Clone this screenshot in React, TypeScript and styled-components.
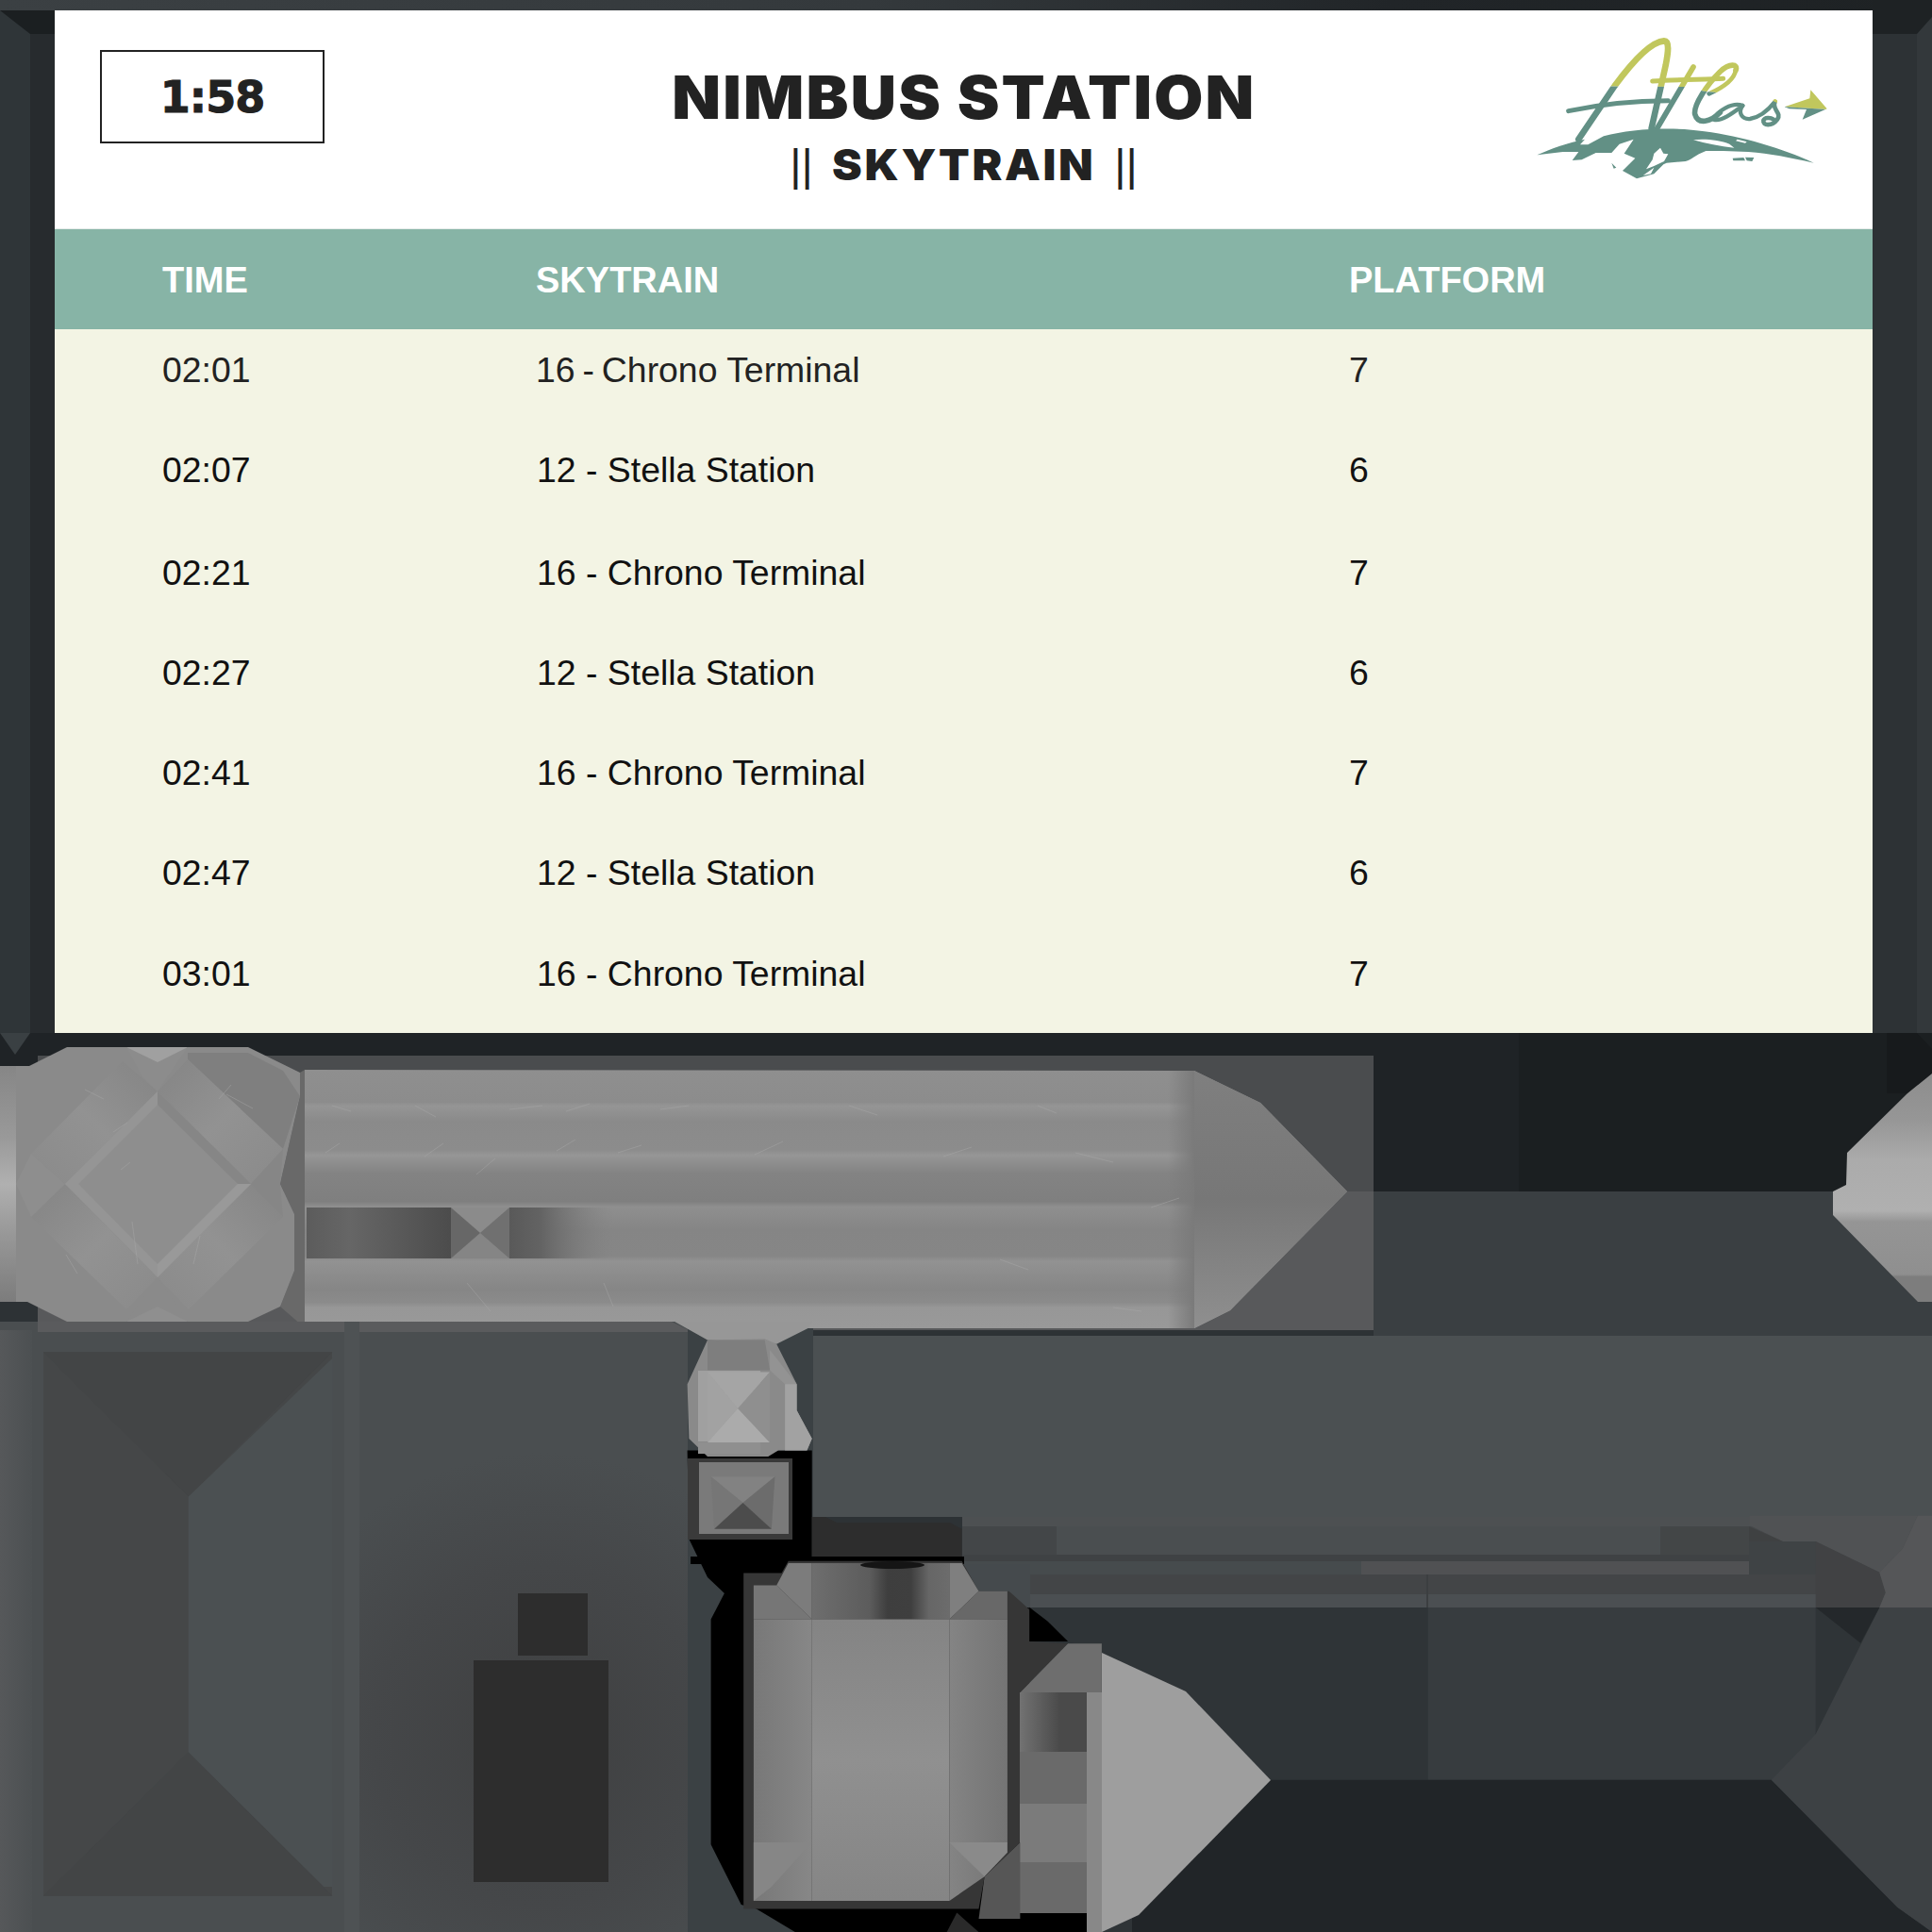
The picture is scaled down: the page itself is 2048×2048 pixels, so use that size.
import styled, { createGlobalStyle } from "styled-components";

type Departure = { time: string; line: string; stop: string; platform: number };

const departures: Departure[] = [
  { time: "02:01", line: "16", stop: "Chrono Terminal", platform: 7 },
  { time: "02:07", line: "12", stop: "Stella Station", platform: 6 },
  { time: "02:21", line: "16", stop: "Chrono Terminal", platform: 7 },
  { time: "02:27", line: "12", stop: "Stella Station", platform: 6 },
  { time: "02:41", line: "16", stop: "Chrono Terminal", platform: 7 },
  { time: "02:47", line: "12", stop: "Stella Station", platform: 6 },
  { time: "03:01", line: "16", stop: "Chrono Terminal", platform: 7 },
];

// zoom crops are stretched, so points are noted in crop space and scaled here
const crop = (ox: number, oy: number, sx: number, sy: number) => (pts: number[]) => {
  const out: string[] = [];
  for (let i = 0; i < pts.length; i += 2) {
    out.push(`${(ox + pts[i] / sx).toFixed(1)},${(oy + pts[i + 1] / sy).toFixed(1)}`);
  }
  return out.join(" ");
};
const z4 = crop(700, 1380, 2.8, 2.347);
const z6 = crop(0, 1380, 2.063, 2.347);
const z7 = crop(1200, 1600, 1.849, 3);

const scratches = [
  [352, 1172, 372, 1178], [440, 1172, 462, 1184], [540, 1176, 575, 1172], [600, 1178, 625, 1170],
  [345, 1222, 360, 1212], [450, 1226, 470, 1212], [590, 1220, 610, 1208], [655, 1222, 680, 1214],
  [505, 1245, 525, 1228], [495, 1360, 520, 1390], [640, 1360, 650, 1385], [700, 1176, 730, 1172],
  [800, 1224, 830, 1210], [900, 1172, 930, 1182], [1000, 1226, 1030, 1216], [1100, 1172, 1120, 1180],
  [1140, 1222, 1180, 1232], [1220, 1280, 1250, 1270], [1060, 1335, 1090, 1346], [1180, 1386, 1210, 1390],
  [90, 1155, 110, 1165], [120, 1200, 135, 1190], [232, 1165, 245, 1150], [128, 1240, 138, 1232],
  [140, 1295, 146, 1340], [212, 1310, 205, 1340], [240, 1160, 268, 1175], [70, 1330, 82, 1350],
];

const Texture = () => (
  <TextureArt viewBox="0 0 2048 2048" aria-hidden="true">
    <defs>
      <linearGradient id="topStrip" x1="0" x2="1" y1="0" y2="0">
        <stop offset="0" stopColor="#3b4043" />
        <stop offset="0.45" stopColor="#34393c" />
        <stop offset="0.72" stopColor="#212528" />
        <stop offset="1" stopColor="#1e2224" />
      </linearGradient>
      <linearGradient id="pencil" x1="0" x2="0" y1="1134" y2="1408" gradientUnits="userSpaceOnUse">
        <stop offset="0" stopColor="#8f8f8f" />
        <stop offset="0.125" stopColor="#8c8c8c" />
        <stop offset="0.14" stopColor="#959595" />
        <stop offset="0.2" stopColor="#8a8a8a" />
        <stop offset="0.31" stopColor="#8c8c8c" />
        <stop offset="0.33" stopColor="#969696" />
        <stop offset="0.4" stopColor="#838383" />
        <stop offset="0.51" stopColor="#7f7f7f" />
        <stop offset="0.53" stopColor="#8f8f8f" />
        <stop offset="0.62" stopColor="#858585" />
        <stop offset="0.72" stopColor="#868686" />
        <stop offset="0.74" stopColor="#929292" />
        <stop offset="0.85" stopColor="#868686" />
        <stop offset="0.9" stopColor="#8b8b8b" />
        <stop offset="0.92" stopColor="#979797" />
        <stop offset="1" stopColor="#999" />
      </linearGradient>
      <linearGradient id="pencilTip" x1="0" x2="0" y1="1134" y2="1408" gradientUnits="userSpaceOnUse">
        <stop offset="0" stopColor="#7f7f7f" />
        <stop offset="0.5" stopColor="#777" />
        <stop offset="1" stopColor="#8f8f8f" />
      </linearGradient>
      <linearGradient id="tipFade" x1="0" x2="1" y1="0" y2="0">
        <stop offset="0" stopColor="#7a7a7a" stopOpacity="0" />
        <stop offset="1" stopColor="#7a7a7a" />
      </linearGradient>
      <linearGradient id="slotA" x1="0" x2="1" y1="0" y2="0">
        <stop offset="0" stopColor="#5c5c5c" />
        <stop offset="0.3" stopColor="#666" />
        <stop offset="1" stopColor="#4c4c4c" />
      </linearGradient>
      <linearGradient id="slotB" x1="0" x2="1" y1="0" y2="0">
        <stop offset="0" stopColor="#595959" />
        <stop offset="0.3" stopColor="#636363" />
        <stop offset="1" stopColor="#7e7e7e" stopOpacity="0" />
      </linearGradient>
      <linearGradient id="wedge" x1="0" x2="0" y1="1138" y2="1380" gradientUnits="userSpaceOnUse">
        <stop offset="0" stopColor="#8d8d8d" />
        <stop offset="0.2" stopColor="#969696" />
        <stop offset="0.38" stopColor="#ababab" />
        <stop offset="0.6" stopColor="#b0b0b0" />
        <stop offset="0.65" stopColor="#959595" />
        <stop offset="0.88" stopColor="#8f8f8f" />
        <stop offset="0.89" stopColor="#7d7d7d" />
        <stop offset="1" stopColor="#7d7d7d" />
      </linearGradient>
      <linearGradient id="plateEdge" x1="0" x2="1" y1="0" y2="0">
        <stop offset="0" stopColor="#56585a" />
        <stop offset="1" stopColor="#4c5052" />
      </linearGradient>
      <radialGradient id="plateGlow" cx="575" cy="1840" r="300" gradientUnits="userSpaceOnUse">
        <stop offset="0" stopColor="#3f4041" />
        <stop offset="0.6" stopColor="#454749" />
        <stop offset="1" stopColor="#4a4e50" />
      </radialGradient>
      <linearGradient id="edgeShine" x1="0" x2="0" y1="1130" y2="1380" gradientUnits="userSpaceOnUse">
        <stop offset="0" stopColor="#868686" />
        <stop offset="0.3" stopColor="#999" />
        <stop offset="0.5" stopColor="#b0b0b0" />
        <stop offset="0.7" stopColor="#999" />
        <stop offset="1" stopColor="#7c7c7c" />
      </linearGradient>
      <linearGradient id="quadA" x1="0" x2="1" y1="0" y2="1">
        <stop offset="0" stopColor="#848484" />
        <stop offset="0.5" stopColor="#929292" />
        <stop offset="1" stopColor="#8a8a8a" />
      </linearGradient>
      <linearGradient id="quadB" x1="1" x2="0" y1="0" y2="1">
        <stop offset="0" stopColor="#848484" />
        <stop offset="0.5" stopColor="#929292" />
        <stop offset="1" stopColor="#8a8a8a" />
      </linearGradient>
      <linearGradient id="capShade" x1="0" x2="1" y1="0" y2="0">
        <stop offset="0" stopColor="#727272" />
        <stop offset="0.6" stopColor="#4a4a4a" />
        <stop offset="1" stopColor="#4a4a4a" />
      </linearGradient>
      <linearGradient id="neck" x1="0" x2="1" y1="0" y2="0">
        <stop offset="0" stopColor="#6e6e6e" />
        <stop offset="0.42" stopColor="#5c5c5c" />
        <stop offset="0.55" stopColor="#3e3e3e" />
        <stop offset="0.72" stopColor="#3f3f3f" />
        <stop offset="0.85" stopColor="#666" />
        <stop offset="1" stopColor="#6c6c6c" />
      </linearGradient>
      <linearGradient id="bodyMid" x1="0" x2="0" y1="0" y2="1">
        <stop offset="0" stopColor="#848484" />
        <stop offset="0.5" stopColor="#909090" />
        <stop offset="1" stopColor="#858585" />
      </linearGradient>
      <linearGradient id="bodyLeft" x1="0" x2="1" y1="0" y2="0">
        <stop offset="0" stopColor="#787878" />
        <stop offset="1" stopColor="#878787" />
      </linearGradient>
      <linearGradient id="bodyRight" x1="0" x2="1" y1="0" y2="0">
        <stop offset="0" stopColor="#848484" />
        <stop offset="1" stopColor="#747474" />
      </linearGradient>
    </defs>

    {/* monitor frame */}
    <rect width="2048" height="1130" fill="#2d3235" />
    <rect width="2048" height="11" fill="url(#topStrip)" />
    <rect x="32" y="11" width="26" height="1084" fill="#272b2e" />
    <rect y="11" width="32" height="1090" fill="#2f3538" />
    <polygon points="0,11 14,22 32,36 58,36 58,11" fill="#1b1f21" />
    <rect x="1985" y="11" width="47" height="25" fill="#1f2326" />
    <rect x="2032" y="0" width="16" height="1100" fill="#33383b" />
    <polygon points="2032,36 2048,18 2048,0 1985,0 1985,36" fill="#1e2224" />
    <rect x="0" y="1095" width="2048" height="168" fill="#1f2326" />
    <rect x="1610" y="1095" width="438" height="168" fill="#1b1f21" />
    <polygon points="2032,1095 2048,1112 2048,1138 2022,1159 2000,1159 2000,1095" fill="#171a1c" />
    <polygon points="0,1095 32,1095 16,1118" fill="#3a4043" />
    <rect x="1456" y="1263" width="592" height="153" fill="#3a3f42" />

    {/* long bar */}
    <rect x="40" y="1119" width="1416" height="144" fill="#4a4c4e" />
    <rect x="40" y="1263" width="1416" height="147" fill="#58595b" />
    <polygon
      points="323,1134 1266,1135 1336,1169 1428,1263 1304,1389 1266,1408 323,1408"
      fill="url(#pencil)"
    />
    <polygon
      points="1266,1135 1336,1169 1428,1263 1304,1389 1266,1408"
      fill="url(#pencilTip)"
    />
    <rect x="1238" y="1135" width="28" height="273" fill="url(#tipFade)" />
    <rect x="325" y="1280" width="153" height="54" fill="url(#slotA)" />
    <rect x="540" y="1280" width="110" height="54" fill="url(#slotB)" />
    <polygon points="478,1280 540,1280 509,1307" fill="#8b8b8b" />
    <polygon points="478,1334 540,1334 509,1307" fill="#858585" />
    <polygon points="478,1280 509,1307 478,1334" fill="#676767" />
    <polygon points="540,1280 509,1307 540,1334" fill="#707070" />
    <polygon points="318,1137 323,1134 323,1408 312,1398 297,1385 312,1347 312,1287 297,1255 318,1162" fill="#696969" />

    {/* knurled block */}
    <polygon
      points="71,1110 134,1110 167,1126 199,1110 263,1110 318,1137 318,1162 297,1255 312,1287 312,1347 297,1385 263,1401 199,1401 167,1385 134,1401 71,1401 29,1380 0,1380 0,1130 31,1130"
      fill="#8a8a8a"
    />
    <rect x="0" y="1130" width="17" height="250" fill="url(#edgeShine)" />
    <polygon points="199,1116 263,1116 300,1135 318,1162 300,1218 199,1123" fill="#7f7f7f" />
    <polygon points="33,1223 130,1125 167,1157 69,1255" fill="url(#quadB)" />
    <polygon points="199,1123 300,1218 266,1255 167,1157" fill="url(#quadA)" />
    <polygon points="33,1290 69,1255 167,1354 134,1388" fill="url(#quadA)" />
    <polygon points="300,1290 200,1388 167,1354 266,1255" fill="url(#quadB)" />
    <polygon points="167,1157 266,1255 167,1354 69,1255" fill="#8e8e8e" />
    <polygon points="167,1157 266,1255 252,1255 167,1171" fill="#868686" />
    <polygon points="167,1157 69,1255 83,1255 167,1171" fill="#959595" />
    <polygon points="69,1255 167,1354 167,1340 83,1255" fill="#959595" />
    <polygon points="266,1255 167,1354 167,1340 252,1255" fill="#999" />
    <polygon points="134,1110 199,1110 167,1157 150,1140" fill="#8c8c8c" />
    <polygon points="134,1401 199,1401 167,1354" fill="#8a8a8a" />
    <polygon points="134,1110 167,1126 199,1110" fill="#a0a0a0" />
    <polygon points="134,1401 167,1385 199,1401" fill="#8f8f8f" />
    <polygon points="17,1255 33,1223 69,1255 33,1290" fill="#8e8e8e" />
    <polygon points="266,1255 300,1218 297,1255 300,1290" fill="#868686" />
    {scratches.map(([x1, y1, x2, y2], i) => (
      <line key={i} x1={x1} y1={y1} x2={x2} y2={y2} stroke="#a8a8a8" strokeOpacity="0.45" strokeWidth="1" />
    ))}

    {/* lower left plate */}
    <rect x="0" y="1401" width="746" height="647" fill="#4a4e50" />
    <rect x="0" y="1410" width="34" height="638" fill="url(#plateEdge)" />
    <polygon points="40,1401 712,1401 746,1418 729,1420 729,1412 40,1412" fill="#5a5b5d" />
    <rect x="46" y="1433" width="306" height="577" fill="#454748" />
    <polygon points={z6([95, 125, 727, 125, 412, 485])} fill="#434546" />
    <polygon points={z6([95, 1478, 727, 1478, 412, 1120])} fill="#434546" />
    <polygon points={z6([727, 140, 412, 485, 412, 1120, 708, 1455, 727, 1455])} fill="#4b5052" />
    <rect x="365" y="1401" width="16" height="647" fill="#4e5254" />
    <rect x="381" y="1412" width="348" height="636" fill="url(#plateGlow)" />
    <rect x="549" y="1689" width="74" height="66" fill="#2d2d2d" />
    <rect x="502" y="1760" width="143" height="235" fill="#2d2d2d" />

    {/* centre parts */}
    <rect x="729" y="1408" width="133" height="640" fill="#3b4144" />
    <polygon
      points={z4([85, 590, 140, 685, 190, 725, 150, 790, 150, 1350, 240, 1500, 285, 1510, 400, 1568, 1568, 1568, 1568, 1100, 1095, 1100, 1095, 760, 450, 650, 450, 370, 80, 370])}
      fill="#000"
    />
    <polygon points={z4([0, 48, 40, 48, 140, 95, 345, 105, 440, 65, 450, 48])} fill="#979797" />

    <rect x="862" y="1416" width="1186" height="192" fill="#4b5052" />
    <polygon points="1090,1704 2048,1704 2048,2048 1168,2048 1168,1752 1132,1740" fill="#2f3437" />
    <polygon points={z7([580, 312, 1340, 312, 1340, 860, 580, 860])} fill="#373c3f" />
    <polygon points={z7([0, 860, 1253, 860, 1500, 1265, 1568, 1344, 0, 1344])} fill="#212528" />
    <polygon
      points={z7([1253, 860, 1340, 715, 1465, 312, 1568, 312, 1568, 1344, 1500, 1265])}
      fill="#3d4144"
    />
    <polygon points={z7([1340, 312, 1465, 312, 1428, 425, 1340, 312])} fill="#24282b" />

    {/* stepped rails */}
    <rect x="1020" y="1608" width="1028" height="96" fill="#46494b" />
    <rect x="1020" y="1608" width="1028" height="10" fill="#4d5052" />
    <rect x="1020" y="1618" width="740" height="30" fill="#4a4e50" />
    <rect x="1020" y="1618" width="100" height="30" fill="#434648" />
    <rect x="1760" y="1618" width="94" height="30" fill="#434647" />
    <polygon points={z7([1210, 20, 1540, 20, 1510, 125, 1465, 200, 1340, 102, 1275, 102, 1210, 50])} fill="#505254" />
    <polygon points="1854,1618 1890,1634 1890,1648 1854,1662" fill="#3f4142" />
    <rect x="1020" y="1648" width="834" height="7" fill="#3f4244" />
    <rect x="1020" y="1655" width="423" height="14" fill="#464b4d" />
    <rect x="1443" y="1655" width="411" height="14" fill="#505153" />
    <rect x="1092" y="1669" width="833" height="21" fill="#434547" />
    <rect x="1092" y="1690" width="833" height="14" fill="#4b4f52" />
    <rect x="1512" y="1669" width="2" height="35" fill="#3c3f41" />
    <rect x="1854" y="1634" width="71" height="35" fill="#3f4345" />
    <polygon points={z7([1340, 102, 1465, 200, 1477, 265, 1465, 312, 1340, 312])} fill="#414244" />
    <polygon
      points={z7([1540, 20, 1568, 20, 1568, 312, 1465, 312, 1477, 265, 1465, 200, 1510, 125])}
      fill="#555658"
    />

    <polygon points={z4([450, 535, 490, 535, 525, 550, 860, 550, 895, 565, 895, 635, 450, 635])} fill="#2d2d2d" />
    <rect x="732" y="1650" width="290" height="8" fill="#000" />
    <polygon points="1020,1658 1092,1658 1092,1704 1020,1704" fill="#454a4d" />
    <polygon points={z4([1095, 760, 1150, 795, 1210, 845, 1095, 845])} fill="#000" />

    {/* upper small block */}
    <polygon
      points={z4([80, 205, 140, 95, 310, 92, 345, 105, 405, 205, 405, 270, 450, 340, 435, 370, 350, 370, 320, 385, 140, 385, 85, 340])}
      fill="#8a8a8a"
    />
    <polygon points={z4([140, 95, 310, 95, 325, 170, 140, 170])} fill="#7e7e7e" />
    <polygon points={z4([325, 120, 405, 205, 370, 205, 325, 170])} fill="#939393" />
    <polygon points={z4([370, 205, 405, 205, 405, 270, 450, 340, 435, 370, 370, 370])} fill="#a2a2a2" />
    <rect x="740" y="1453" width="66" height="75" fill="#a0a0a0" />
    <polygon points={z4([140, 175, 325, 175, 230, 265])} fill="#a5a5a5" />
    <polygon points={z4([140, 350, 325, 350, 230, 265])} fill="#ababab" />
    <polygon points={z4([140, 175, 230, 265, 140, 350])} fill="#a2a2a2" />
    <polygon points={z4([325, 175, 230, 265, 325, 350])} fill="#8f8f8f" />
    <rect x="740" y="1529" width="66" height="12" fill="#8f8f8f" />

    {/* lower small block */}
    <rect x="729" y="1546" width="111" height="86" fill="#3a3a3a" />
    <rect x="741" y="1550" width="95" height="76" fill="#7a7a7a" />
    <polygon points={z4([150, 435, 340, 435, 245, 500])} fill="#828282" />
    <polygon points={z4([150, 435, 245, 500, 160, 565])} fill="#767676" />
    <polygon points={z4([340, 435, 245, 500, 330, 565])} fill="#6c6c6c" />
    <polygon points={z4([245, 500, 330, 565, 160, 565])} fill="#4c4c4c" />

    {/* grip body */}
    <polygon
      points={z4([247, 675, 360, 675, 380, 645, 895, 645, 945, 720, 1035, 720, 1095, 765, 1095, 845, 1210, 850, 1068, 972, 1068, 1345, 962, 1430, 945, 1510, 247, 1510])}
      fill="#363636"
    />
    <polygon points={z4([277, 705, 345, 705, 450, 790, 277, 790])} fill="#767676" />
    <polygon points={z4([345, 705, 380, 650, 450, 650, 450, 790])} fill="#7c7c7c" />
    <polygon points={z4([450, 650, 858, 650, 858, 790, 450, 790])} fill="url(#neck)" />
    <polygon points={z4([858, 650, 895, 650, 945, 720, 858, 790])} fill="#7f7f7f" />
    <polygon points={z4([945, 720, 1030, 720, 1030, 790, 858, 790])} fill="#686868" />
    <polygon points={z4([277, 790, 450, 790, 450, 1490, 277, 1490])} fill="url(#bodyLeft)" />
    <polygon points={z4([450, 790, 858, 790, 858, 1490, 450, 1490])} fill="url(#bodyMid)" />
    <polygon points={z4([858, 790, 1030, 790, 1030, 1345, 962, 1430, 858, 1490])} fill="url(#bodyRight)" />
    <polygon points={z4([277, 1345, 450, 1345, 330, 1455, 277, 1490])} fill="#868686" />
    <polygon points={z4([858, 1345, 1030, 1345, 1030, 1370, 962, 1430])} fill="#8a8a8a" />
    <ellipse cx="946" cy="1659" rx="34" ry="4" fill="#151515" />

    <polygon points={z4([1068, 972, 1210, 850, 1310, 850, 1310, 972])} fill="#6e6e6e" />
    <rect x="1081" y="1794" width="71" height="63" fill="url(#capShade)" />
    <rect x="1081" y="1857" width="71" height="55" fill="#6a6a6a" />
    <rect x="1081" y="1912" width="71" height="62" fill="#7b7b7b" />
    <rect x="1081" y="1974" width="71" height="54" fill="#6a6a6a" />
    <polygon points={z4([962, 1430, 1068, 1345, 1068, 1535, 945, 1535])} fill="#565656" />
    <polygon points={z4([850, 1568, 880, 1520, 945, 1568])} fill="#2a2a2a" />
    <rect x="1152" y="1794" width="16" height="254" fill="#888" />
    <polygon points="1168,1752 1257,1793 1347,1887 1207,2030 1168,2048" fill="#9e9e9e" />

    {/* wedge on the right */}
    <polygon
      points="2048,1138 2022,1159 1958,1222 1957,1256 1943,1263 1943,1288 2033,1380 2048,1380"
      fill="url(#wedge)"
    />
  </TextureArt>
);

const Strokes = () => (
  <g fill="none" strokeLinecap="round" strokeLinejoin="round">
    <path d="M160 335 L275 165 C330 90 390 25 432 22 C450 22 445 60 437 100 L392 300" strokeWidth="20" />
    <path d="M128 245 C220 225 340 212 445 212" strokeWidth="15" />
    <path d="M525 105 L410 300" strokeWidth="17" />
    <path d="M395 150 C470 145 560 145 620 142" strokeWidth="15" />
    <path d="M660 115 C668 95 640 92 610 120 C570 160 525 225 530 255 C540 290 580 280 610 250" strokeWidth="17" />
    <path d="M660 115 C655 145 620 170 575 190" strokeWidth="14" />
    <path d="M682 228 C650 215 600 245 590 272 C612 280 650 252 682 228" strokeWidth="13" />
    <path d="M682 228 C665 250 680 272 705 270 C735 266 765 240 785 215" strokeWidth="13" />
    <path d="M785 215 C772 240 808 250 792 272 C775 295 745 292 748 275 C752 265 770 265 780 272" strokeWidth="14" />
  </g>
);

const Logo = () => (
  <LogoArt viewBox="0 0 990 480" role="img" aria-label="Atlas">
    <defs>
      <clipPath id="logoTop">
        <polygon points="0,0 990,0 990,240 950,240 820,232 770,210 620,188 560,182 500,168 0,165" />
      </clipPath>
      <clipPath id="logoBottom">
        <polygon points="0,480 990,480 990,240 950,240 820,232 770,210 620,188 560,182 500,168 0,165" />
      </clipPath>
    </defs>
    <g clipPath="url(#logoTop)" stroke="#c1c75d" fill="#c1c75d">
      <Strokes />
      <polygon stroke="none" points="815,232 895,205 898,178 950,238 872,272 885,240 830,238" />
    </g>
    <g clipPath="url(#logoBottom)" stroke="#629085" fill="#629085">
      <Strokes />
      <polygon stroke="none" points="815,232 895,205 898,178 950,238 872,272 885,240 830,238" />
    </g>
    <path
      fill="#629085"
      d="M28 385 C70 365 130 345 180 335 L165 352 L190 352 L240 325 C330 300 470 295 560 310 C680 325 810 365 908 410 C830 393 770 380 700 375 L620 372 L565 372 C530 385 520 400 500 405 L440 410 L430 415 L400 445 L345 460 L300 435 L340 395 L305 380 L335 335 L290 350 L265 378 L215 378 L170 400 L140 402 L160 375 L110 375 Z"
    />
    <path
      fill="#629085"
      d="M265 410 L280 425 L272 428 Z M650 395 L685 393 L690 403 L652 403 Z M690 392 L718 393 L712 405 L695 403 Z"
    />
    <path
      fill="#fff"
      d="M400 380 L420 362 L430 380 L445 382 L432 405 L400 420 L375 430 L395 400 Z M365 450 L400 425 L390 445 Z M665 335 L695 343 L690 347 L660 340 Z M525 337 C560 332 610 338 640 350 L655 362 C610 358 565 348 525 337 Z"
    />
  </LogoArt>
);

export default function App() {
  return (
    <Page>
      <GlobalStyle />
      <Texture />
      <Screen>
        <Masthead>
          <Clock>1:58</Clock>
          <Titles>
            <StationName>NIMBUS STATION</StationName>
            <ModeName>
              <Bars>||</Bars>
              <ModeWord>SKYTRAIN</ModeWord>
              <Bars>||</Bars>
            </ModeName>
          </Titles>
          <Logo />
        </Masthead>
        <TableHead>
          <span>TIME</span>
          <span>SKYTRAIN</span>
          <span>PLATFORM</span>
        </TableHead>
        <TableBody>
          {departures.map((d, i) => (
            <Row key={d.time} $first={i === 0} $lowered={i >= 2}>
              <span>{d.time}</span>
              <span>
                <LinePrefix $tight={i === 0}>{d.line} - </LinePrefix>
                {d.stop}
              </span>
              <span>{d.platform}</span>
            </Row>
          ))}
        </TableBody>
      </Screen>
    </Page>
  );
}

const GlobalStyle = createGlobalStyle`
  html, body {
    margin: 0;
    padding: 0;
    background: #2d3235;
  }
`;

const Page = styled.div`
  position: relative;
  width: 2048px;
  height: 2048px;
  overflow: hidden;
  padding: 11px 63px 0 58px;
  box-sizing: border-box;
  font-family: "Liberation Sans", Arial, sans-serif;
`;

const TextureArt = styled.svg`
  position: absolute;
  inset: 0;
  width: 2048px;
  height: 2048px;
  display: block;
`;

const Screen = styled.main`
  position: relative;
  display: flex;
  flex-direction: column;
  height: 1084px;
  overflow: hidden;
  background: #f3f4e4;
`;

const Masthead = styled.header`
  flex: none;
  display: grid;
  grid-template-columns: 1fr auto 1fr;
  height: 232px;
  background: #fff;
  border-bottom: 1px solid #e6ece9;
  box-sizing: border-box;
`;

const Clock = styled.div`
  justify-self: start;
  width: 238px;
  height: 99px;
  margin: 42px 0 0 48px;
  box-sizing: border-box;
  border: 2px solid #222;
  display: flex;
  align-items: center;
  justify-content: center;
  font-family: "DejaVu Sans", sans-serif;
  font-weight: 700;
  font-size: 46px;
  letter-spacing: -1px;
  color: #222;
  -webkit-text-stroke: 1px #222;
`;

const Titles = styled.div`
  display: flex;
  flex-direction: column;
  align-items: center;
  padding-top: 60px;
  color: #222;
`;

const StationName = styled.h1`
  margin: 0;
  font-family: Inter, sans-serif;
  font-weight: 900;
  font-size: 63px;
  line-height: 64px;
  letter-spacing: 2px;
  transform: scaleX(1.068);
`;

const ModeName = styled.div`
  display: flex;
  align-items: center;
  gap: 28px;
  margin-top: 11px;
  height: 56px;
  font-family: Inter, sans-serif;
  font-weight: 900;
  font-size: 45px;
`;

const ModeWord = styled.span`
  letter-spacing: 2.5px;
  transform: scaleX(1.06);
`;

const Bars = styled.span`
  font-family: "Liberation Sans", sans-serif;
  font-weight: 400;
  font-size: 47px;
`;

const LogoArt = styled.svg`
  justify-self: end;
  width: 330px;
  height: 160px;
  margin: 25px 35px 0 0;
`;

const TableHead = styled.div`
  flex: none;
  display: grid;
  grid-template-columns: 396px 862px 1fr;
  align-items: center;
  height: 106px;
  padding: 2px 0 0 114px;
  box-sizing: border-box;
  background: #87b4a6;
  color: #fff;
  font-weight: 700;
  font-size: 38px;
`;

const TableBody = styled.div`
  display: flex;
  flex-direction: column;
  padding-top: 21px;
`;

const Row = styled.div<{ $first: boolean; $lowered: boolean }>`
  display: grid;
  grid-template-columns: 396px 862px 1fr;
  height: 106.1px;
  flex: none;
  padding-left: 114px;
  font-size: 37.4px;
  line-height: 44px;
  color: ${(p) => (p.$first ? "#222" : "#111")};
  transform: translateY(${(p) => (p.$lowered ? "3px" : "0")});
`;

const LinePrefix = styled.span<{ $tight: boolean }>`
  margin-left: ${(p) => (p.$tight ? "0" : "1px")};
  word-spacing: ${(p) => (p.$tight ? "-2.5px" : "0")};
`;
